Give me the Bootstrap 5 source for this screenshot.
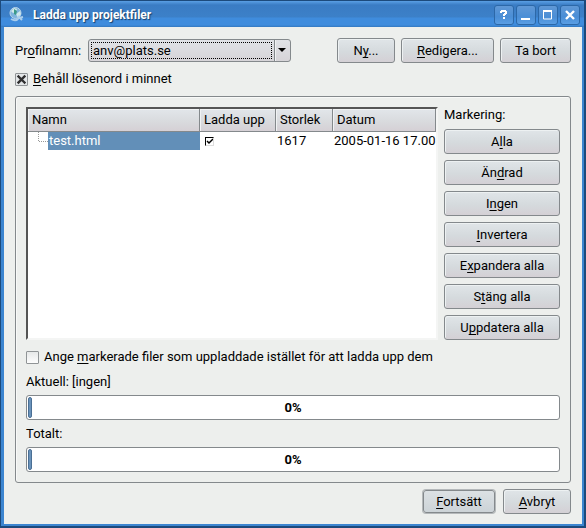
<!DOCTYPE html>
<html lang="sv">
<head>
<meta charset="utf-8">
<meta name="viewport" content="width=device-width, initial-scale=1">
<title>Ladda upp projektfiler</title>
<link rel="stylesheet" href="https://cdn.jsdelivr.net/npm/bootstrap@5.3.0/dist/css/bootstrap.min.css">
<style>
body { font-family: Roboto, sans-serif; font-size: 13px; line-height: 18px; color: #000; background: #1f4f86; }
u { text-underline-offset: 2px; text-decoration-skip-ink: none; }
.win { min-height: 100vh; background: #3c85d0; border: 1px solid #1c4a7c; border-bottom-width: 2px; border-right-width: 2px; padding: 0 2px 2px 3px; }
.titlebar { height: 26px; margin: 0 -2px 0 -3px; padding: 0 4px 0 7px; background: linear-gradient(#5a9fe4 0, #3a7cc4 4px, #3c80c8 16px, #3f8cdd 17px, #3f8cdd 24px, #3478bf 26px); }
.titlebar h1 { font-size: 12px; line-height: 18px; font-weight: 700; color: #fff; text-shadow: 1px 1px 1px #153d68; margin: 2px 0 0 8px; }
.tbs { gap: 2px; }
.tb { width: 20px; height: 20px; padding: 0; margin-top: 2px; border: 1px solid #2c68a8; border-radius: 3px; background: linear-gradient(#6098d6, #4a8ed6 60%, #5a9ee4); display: flex; align-items: center; justify-content: center; }
.client { background: #edefed; padding: 11px 11px 10px; }
.kbtn { font-size: 13px; line-height: 18px; color: #000; padding: 3px 4px 2px; height: 25px; border: 1px solid #84898c; border-radius: 3px; background: linear-gradient(#e0e5e8, #d5dadd 55%, #d4d0d5); box-shadow: inset 1px 1px 0 #edf1f2; white-space: nowrap; }
.kbtn:hover { border-color: #63686c; }
.kbtn.dflt { box-shadow: 0 0 0 1px #b4b8ba; border-color: #84898c; height: 23px; padding: 1px 4px; background: linear-gradient(#dce1e4, #ccd3d7); }
.w-new { width: 58px; } .w-edit { width: 93px; } .w-del { width: 71px; } .w-ok { width: 72px; } .w-cancel { width: 68px; }
.top-actions { gap: 6px; }
.prof { width: 73px; }
.combo { width: 203px; height: 23px; }
.combo select { appearance: none; width: 100%; height: 23px; font-size: 13px; line-height: 18px; padding: 1px 22px 0 4px; color: #000; border: 1px solid #84898c; border-radius: 3px;
  background: url("data:image/svg+xml,%3Csvg xmlns='http://www.w3.org/2000/svg' width='16' height='21'%3E%3Cpath d='M0 0h1v21H0z' fill='%2384898c'/%3E%3Cpath d='M1 0h1v21H1z' fill='%23f0f2f3'/%3E%3Cpath d='M4 8h8L8 12z'/%3E%3C/svg%3E") right top no-repeat, linear-gradient(#e0e2e6, #d6d4d8); }
.combo .focusbox { position: absolute; left: 3px; top: 3px; right: 19px; bottom: 3px; border: 1px dotted #000; pointer-events: none; }
.kcheck { appearance: none; width: 13px; height: 13px; margin: 0 5px 0 0; border: 1px solid #909496; border-radius: 1px; background: linear-gradient(#e6e8e8, #fdfdfd); flex: none; }
.kcheck:checked { background: #e4e7e8 url("data:image/svg+xml,%3Csvg xmlns='http://www.w3.org/2000/svg' width='11' height='11'%3E%3Cpath d='M2.5 2.5l6 6M8.5 2.5l-6 6' stroke='%23303030' stroke-width='2.4' stroke-linecap='square'/%3E%3C/svg%3E") center no-repeat; }
.keep { margin-top: 7px; }
.group { border: 1px solid #84898c; border-radius: 3px; box-shadow: inset 1px 1px 0 #f8f9f8; padding: 10px; margin-top: 8px; }
.tree { background: #fff; border: 2px solid #555; border-right-color: #f4f5f4; border-bottom-color: #f4f5f4; min-width: 0; }
.tree table { width: 100%; table-layout: fixed; border-collapse: separate; border-spacing: 0; }
.c-up { width: 76px; } .c-size { width: 57px; } .c-date { width: 103px; }
.tree th { font-weight: 400; height: 23px; padding: 1px 4px; background: linear-gradient(#e2e6ea, #d9dbde 55%, #d5d0d5); border-right: 1px solid #84898c; border-bottom: 1px solid #84898c; box-shadow: inset 1px 1px 0 #f0f2f3; white-space: nowrap; }
.tree td { height: 18px; padding: 0 0 0 1px; white-space: nowrap; }
.tree td:first-child { padding: 0; }
.branch { width: 20px; flex: none; background: url("data:image/svg+xml,%3Csvg xmlns='http://www.w3.org/2000/svg' width='20' height='18'%3E%3Cpath d='M10.5 0v10M11 9.500h9' stroke='%23999' stroke-dasharray='1 1' fill='none'/%3E%3C/svg%3E"); }
.sel { background: #628fb8; color: #fff; padding-left: 1px; }
.tcheck { appearance: none; display: block; width: 9px; height: 9px; margin: 0 0 0 4px; border: 1px solid #888; border-top-color: #000; border-left-color: #000; border-right-color: #ddd; border-bottom-color: #ddd; background: #fff; }
.tcheck:checked { background-image: url("data:image/svg+xml,%3Csvg xmlns='http://www.w3.org/2000/svg' width='7' height='7'%3E%3Cpath d='M1 3l2 2 4-4' stroke='%23000' stroke-width='1.500' fill='none'/%3E%3C/svg%3E"); }
.side { width: 116px; margin-left: 6px; gap: 6px; }
.side span { height: 16px; line-height: 16px; }
.kprog { height: 25px; border: 1px solid #84898c; border-radius: 3px; background: #fff; color: #000; padding: 1px; font-size: 13px; }
.kprog .fill { min-width: 4px; border: 1px solid #4a6f94; border-radius: 2px; background: #6a93bb; }
.kprog .pct { position: absolute; inset: 0; display: flex; align-items: center; justify-content: center; font-weight: 700; }
.marks { margin: 8px 0 7px; }
.cap { margin: 5px 0 4px; }
.actions { margin-top: 6px; gap: 8px; }
</style>
</head>
<body>
<div class="win d-flex flex-column">
  <header class="titlebar d-flex align-items-center">
    <svg width="17" height="17" viewBox="0 0 17 17" aria-hidden="true"><circle cx="7.500" cy="7" r="5.500" fill="#7fb4dc" stroke="#b7d3ea"/><path d="M3 5l3-3 3 1-1 3-3 1zM8 8l4-3 1 3-3 4z" fill="#cfe8ea"/><path d="M6 3l3 2-1 4-2-1z" fill="#3c9a88"/><path d="M3 13q5 3 8-1l4-1M10 10l4 4" fill="none" stroke="#a9cdec" stroke-width="2"/></svg>
    <h1 class="flex-grow-1">Ladda upp projektfiler</h1>
    <div class="tbs d-flex">
      <button class="tb" type="button" aria-label="Hjälp"><svg width="12" height="12" viewBox="0 0 12 12"><path d="M2 2h1V1h5v1h1v3H8v1H7v1H5V5h1V4h1V3H4v1H2zM5 8h2v2H5z" fill="#fff"/></svg></button>
      <button class="tb" type="button" aria-label="Minimera"><svg width="12" height="12" viewBox="0 0 12 12"><path d="M1 9h9v2H1z" fill="#fff"/></svg></button>
      <button class="tb" type="button" aria-label="Maximera"><svg width="12" height="12" viewBox="0 0 12 12"><path d="M1.500 2h8v8h-8z" fill="none" stroke="#fff"/><path d="M1 1h9v2H1z" fill="#fff"/></svg></button>
      <button class="tb" type="button" aria-label="Stäng"><svg width="12" height="12" viewBox="0 0 12 12"><path d="M2 2l8 8M10 2l-8 8" stroke="#fff" stroke-width="2.400"/></svg></button>
    </div>
  </header>
  <main class="client flex-grow-1">
    <div class="d-flex align-items-center">
      <label class="prof" for="profile">Pr<u>o</u>filnamn:</label>
      <div class="combo position-relative">
        <select id="profile"><option>anv@plats.se</option></select><span class="focusbox"></span>
      </div>
      <div class="d-flex ms-auto top-actions">
        <button type="button" class="kbtn w-new">N<u>y</u>...</button>
        <button type="button" class="kbtn w-edit"><u>R</u>edigera...</button>
        <button type="button" class="kbtn w-del">Ta bort</button>
      </div>
    </div>
    <div class="keep d-flex align-items-center">
      <input class="kcheck" type="checkbox" id="keep" checked><label for="keep"><u>B</u>ehåll lösenord i minnet</label>
    </div>
    <section class="group">
      <div class="d-flex">
        <div class="tree flex-grow-1">
          <table>
            <colgroup><col><col class="c-up"><col class="c-size"><col class="c-date"></colgroup>
            <thead><tr><th>Namn</th><th>Ladda upp</th><th>Storlek</th><th>Datum</th></tr></thead>
            <tbody><tr>
              <td><div class="d-flex"><span class="branch"></span><span class="sel flex-grow-1">test.html</span></div></td>
              <td><input class="tcheck" type="checkbox" checked aria-label="Ladda upp test.html"></td><td>1617</td><td>2005-01-16 17.00</td>
            </tr></tbody>
          </table>
        </div>
        <div class="side d-flex flex-column flex-shrink-0">
          <span>Markering:</span>
          <button type="button" class="kbtn">A<u>l</u>la</button>
          <button type="button" class="kbtn">Än<u>d</u>rad</button>
          <button type="button" class="kbtn">I<u>n</u>gen</button>
          <button type="button" class="kbtn"><u>I</u>nvertera</button>
          <button type="button" class="kbtn">E<u>x</u>pandera alla</button>
          <button type="button" class="kbtn">S<u>t</u>äng alla</button>
          <button type="button" class="kbtn">U<u>p</u>pdatera alla</button>
        </div>
      </div>
      <div class="marks d-flex align-items-center">
        <input class="kcheck" type="checkbox" id="mark"><label for="mark">Ange <u>m</u>arkerade filer som uppladdade istället för att ladda upp dem</label>
      </div>
      <div class="cap">Aktuell: [ingen]</div>
      <div class="kprog progress position-relative" role="progressbar" aria-label="Aktuell" aria-valuenow="0" aria-valuemin="0" aria-valuemax="100"><div class="fill" style="width:0%"></div><span class="pct">0%</span></div>
      <div class="cap">Totalt:</div>
      <div class="kprog progress position-relative" role="progressbar" aria-label="Totalt" aria-valuenow="0" aria-valuemin="0" aria-valuemax="100"><div class="fill" style="width:0%"></div><span class="pct">0%</span></div>
    </section>
    <div class="actions d-flex justify-content-end align-items-center">
      <button type="submit" class="kbtn dflt w-ok"><u>F</u>ortsätt</button>
      <button type="button" class="kbtn w-cancel"><u>A</u>vbryt</button>
    </div>
  </main>
</div>
<script src="https://cdn.jsdelivr.net/npm/bootstrap@5.3.0/dist/js/bootstrap.bundle.min.js"></script>
</body>
</html>
